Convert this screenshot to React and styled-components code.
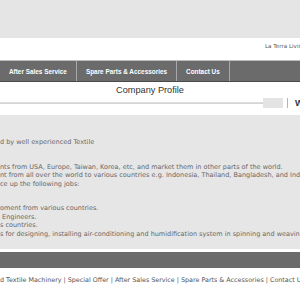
import React from 'react';
import styled, { createGlobalStyle } from 'styled-components';

const Global = createGlobalStyle`
  html, body {
    margin: 0;
    padding: 0;
    background: #fff;
  }
  body {
    width: 300px;
    height: 300px;
    overflow: hidden;
  }
`;

const navItems = ['After Sales Service', 'Spare Parts & Accessories', 'Contact Us'];

const paragraphs = [
  ['d by well experienced Textile'],
  [
    'nts from USA, Europe, Taiwan, Korea, etc, and market them in other parts of the world.',
    'nt from all over the world to various countries e.g. Indonesia, Thailand, Bangladesh, and India.',
    'ce up the following jobs:',
  ],
  [
    'oment from various countries.',
    ' Engineers.',
    's countries.',
    's for designing, installing air-conditioning and humidification system in spinning and weaving plants.',
  ],
];

const footerLinks = ['d Textile Machinery', 'Special Offer', 'After Sales Service', 'Spare Parts & Accessories', 'Contact Us'];

const App = () => (
  <Page>
    <Global />
    <TopBand />
    <Header>
      <Company>La Terra Living</Company>
    </Header>
    <Nav>
      {navItems.map((item, i) => (
        <NavItem key={item} first={i === 0}>{item}</NavItem>
      ))}
      <NavRest />
    </Nav>
    <Title>Company Profile</Title>
    <Ticker>
      <TickerLine />
      <TickerBox />
      <TickerDivider />
      <TickerText>Welcome</TickerText>
    </Ticker>
    <Content>
      {paragraphs.map((lines, i) => (
        <Para key={i}>
          {lines.map(line => <Line key={line}>{line}</Line>)}
        </Para>
      ))}
    </Content>
    <FooterBar />
    <FooterLinks>
      {footerLinks.map((link, i) => (
        <span key={link}>{i > 0 && ' | '}{link}</span>
      ))}
    </FooterLinks>
  </Page>
);

const Page = styled.div`
  width: 300px;
  height: 300px;
  overflow: hidden;
  display: flex;
  flex-direction: column;
  font-family: "DejaVu Sans", Verdana, sans-serif;
`;

const TopBand = styled.div`
  height: 38px;
  background: #e5e5e5;
  flex-shrink: 0;
`;

const Header = styled.div`
  height: 22px;
  flex-shrink: 0;
  display: flex;
  align-items: flex-start;
  padding: 5px 0 0 265px;
  box-sizing: border-box;
  overflow: hidden;
`;

const Company = styled.span`
  font-size: 5.6px;
  line-height: 7px;
  color: #555;
  white-space: nowrap;
`;

const Nav = styled.div`
  height: 22px;
  flex-shrink: 0;
  display: flex;
  background: #6b6b6b;
  border-top: 1px solid #bdbdbd;
  border-bottom: 1px solid #4a4a4a;
  box-sizing: border-box;
`;

const NavItem = styled.div`
  display: flex;
  align-items: center;
  padding: 0 9px;
  border-left: ${p => (p.first ? 'none' : '1px solid #a8a8a8')};
  color: #fff;
  font-family: "Liberation Sans", Arial, sans-serif;
  font-weight: bold;
  font-size: 6.4px;
  white-space: nowrap;
`;

const NavRest = styled.div`
  flex: 1;
  border-left: 1px solid #a8a8a8;
`;

const Title = styled.div`
  height: 15px;
  flex-shrink: 0;
  display: flex;
  align-items: center;
  justify-content: center;
  font-family: "Liberation Sans", Arial, sans-serif;
  font-size: 9.2px;
  color: #333;
`;

const Ticker = styled.div`
  height: 11px;
  flex-shrink: 0;
  display: flex;
  align-items: center;
  overflow: hidden;
`;

const TickerLine = styled.div`
  width: 263px;
  height: 2px;
  flex-shrink: 0;
  background: linear-gradient(#e2e2e2, #d0d0d0);
`;

const TickerBox = styled.div`
  width: 20px;
  height: 10px;
  flex-shrink: 0;
  background: #e4e4e4;
`;

const TickerDivider = styled.div`
  width: 1px;
  height: 10px;
  flex-shrink: 0;
  margin: 0 7px 0 4px;
  background: #b5b5b5;
`;

const TickerText = styled.span`
  font-family: "Liberation Sans", Arial, sans-serif;
  font-weight: bold;
  font-size: 9px;
  color: #333;
  white-space: nowrap;
`;

const Content = styled.div`
  margin-top: 7px;
  height: 134px;
  flex-shrink: 0;
  background: #e6e6e6;
  padding-top: 23px;
  box-sizing: border-box;
  display: flex;
  flex-direction: column;
  gap: 16px;
  overflow: hidden;
`;

const Para = styled.div`
  display: flex;
  flex-direction: column;
`;

const Line = styled.div`
  font-size: 6.5px;
  line-height: 8.5px;
  color: #666;
  white-space: pre;
`;

const FooterBar = styled.div`
  margin-top: 3px;
  height: 16px;
  flex-shrink: 0;
  background: #6b6b6b;
`;

const FooterLinks = styled.div`
  padding-top: 8px;
  font-size: 6.38px;
  line-height: 8px;
  color: #555;
  white-space: nowrap;
`;

export default App;
